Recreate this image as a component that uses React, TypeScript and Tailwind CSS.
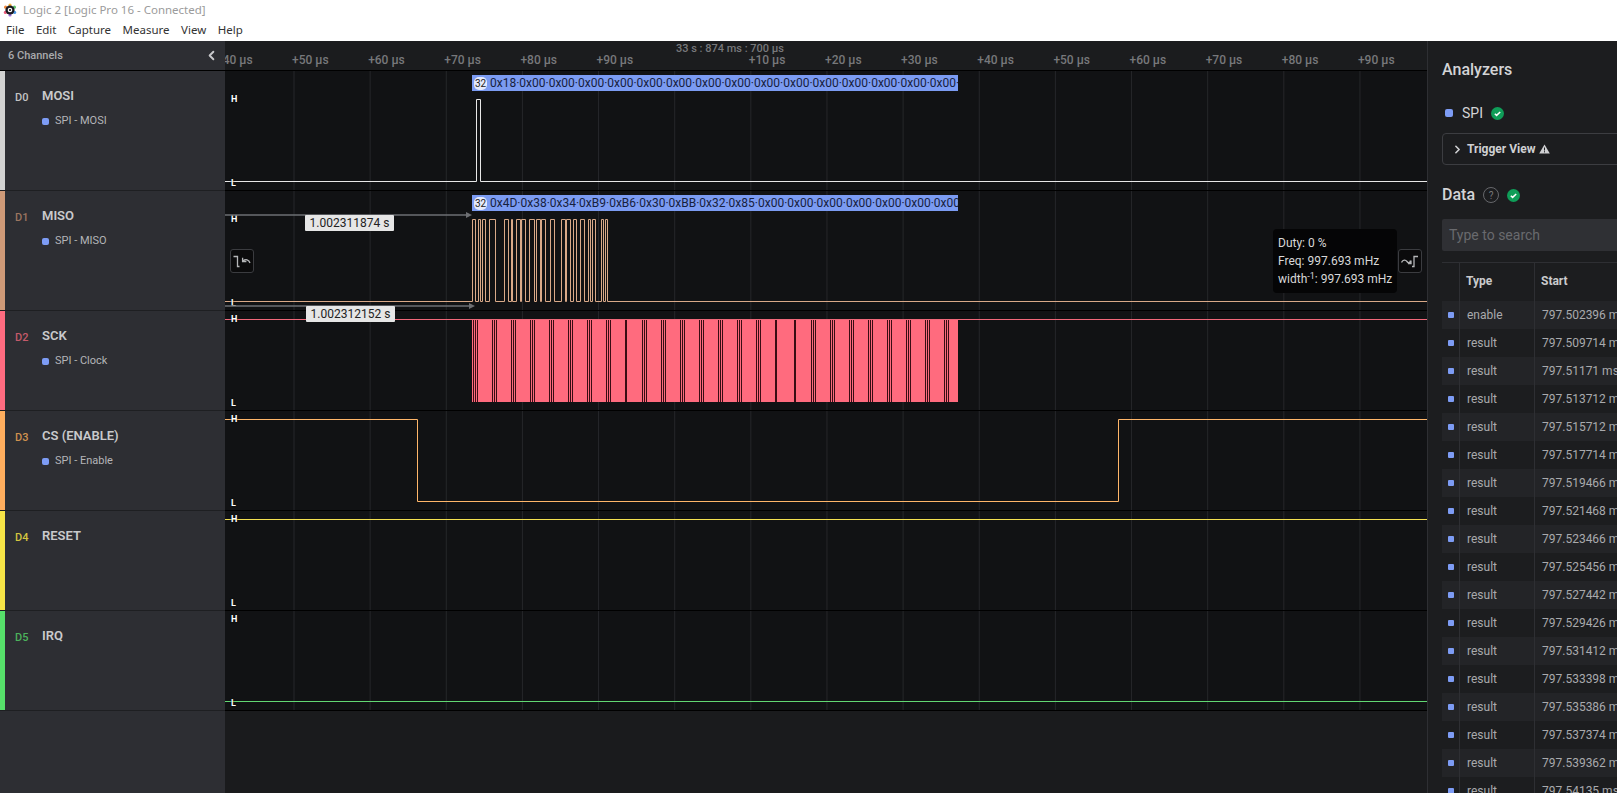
import { ChevronLeft, ChevronRight } from "lucide-react";

const GRID = Array.from({ length: 15 }, (_, i) => 294 + i * 76.14);
const TICKS = ["+50", "+60", "+70", "+80", "+90", "", "+10", "+20", "+30", "+40", "+50", "+60", "+70", "+80", "+90"];

// MISO high pulses, read off the capture (page x)
const MISO_PULSES: [number, number][] = [
  [472.5, 475], [478, 480.5], [482, 485], [489.5, 495], [504.5, 508.5], [511, 512.5], [516.5, 520],
  [521, 525], [529.5, 534], [536, 540], [541.5, 545], [550, 554.5], [561.5, 565.5], [566.5, 570],
  [573.5, 576.5], [580, 584.5], [588, 590.5], [592, 595], [601.5, 603.5], [605, 607.5],
];

// SCK: dark clock gaps, x of first stripe, triple or single
const SCK_TRIPLE = [473, 492, 511, 530, 549, 568, 587, 606, 642, 661, 680, 699, 718, 737, 756, 811, 830, 849, 868, 887, 906, 925, 944];
const SCK_SINGLE = [625, 775, 794];

const STARTS = [
  "797.502396", "797.509714", "797.51171", "797.513712", "797.515712", "797.517714", "797.519466", "797.521468", "797.523466",
  "797.525456", "797.527442", "797.529426", "797.531412", "797.533398", "797.535386", "797.537374", "797.539362", "797.54135",
];

const MOSI_BYTES = ["0x18", ...Array(17).fill("0x00")];
const MISO_BYTES = ["0x4D", "0x38", "0x34", "0xB9", "0xB6", "0x30", "0xBB", "0x32", "0x85", ...Array(9).fill("0x00")];

function pulsePath(low: number, high: number, pulses: [number, number][]) {
  const snap = (x: number) => Math.floor(x) + 0.5;
  let d = `M225 ${low}`;
  for (const [a, b] of pulses) d += ` H${snap(a)} V${high} H${snap(b)} V${low}`;
  return d + " H1427";
}

function Logo() {
  return (
    <svg width="14" height="14" viewBox="0 0 14 14" className="mr-[4px] ml-[3px] shrink-0">
      <circle cx="7" cy="2" r="1.6" fill="#f6b73c" />
      <circle cx="11.4" cy="4.2" r="1.6" fill="#5fc46b" />
      <circle cx="11.6" cy="9.4" r="1.6" fill="#4d9be8" />
      <circle cx="7" cy="12" r="1.6" fill="#9b6fd8" />
      <circle cx="2.4" cy="9.4" r="1.6" fill="#ea5a7b" />
      <circle cx="2.6" cy="4.2" r="1.6" fill="#f28a3c" />
      <circle cx="7" cy="7" r="4.6" fill="#1b1b22" />
      <circle cx="7" cy="7" r="2.3" fill="#fff" />
      <circle cx="7" cy="7" r="1.1" fill="#1b1b22" />
    </svg>
  );
}

function Check() {
  return (
    <svg width="13" height="13" viewBox="0 0 13 13">
      <circle cx="6.5" cy="6.5" r="6.5" fill="#0f9d58" />
      <path d="M3.8 6.8 5.6 8.4 9.2 5" fill="none" stroke="#fff" strokeWidth="1.5" />
    </svg>
  );
}

function ChannelLabel(props: { id: string; name: string; sub?: string; strip: string; idClass: string; className: string }) {
  return (
    <div className={`flex border-b border-[#1e1f22] ${props.className}`}>
      <div className={`w-[5px] ${props.strip}`} />
      <div className={`w-[37px] pt-[20px] pl-[10px] text-[11px] leading-[13px] font-medium ${props.idClass}`}>{props.id}</div>
      <div className="pt-[16px]">
        <div className="text-[13px] leading-[18px] font-semibold text-[#c9cacc]">{props.name}</div>
        {props.sub && (
          <div className="mt-[9px] flex items-center gap-[6px] text-[11px] leading-[14px] text-[#b4b5b8]">
            <span className="h-[7px] w-[7px] rounded-[2px] bg-[#7d9cf5]" />
            {props.sub}
          </div>
        )}
      </div>
    </div>
  );
}

function WaveRow(props: { height: number; hi: number; lo: number; children?: React.ReactNode }) {
  return (
    <div className="relative border-b border-black bg-[#111214]" style={{ height: props.height }}>
      <svg className="absolute inset-0" width="1202" height={props.height - 1} viewBox={`225 0 1202 ${props.height - 1}`}>
        {GRID.map((x) => (
          <line key={x} x1={x} x2={x} y1="0" y2={props.height} stroke="#26272a" />
        ))}
      </svg>
      {props.children}
      <span className="absolute left-[6px] text-[9px] leading-[10px] font-bold text-white [text-shadow:0_0_2px_#000]" style={{ top: props.hi - 5 }}>
        H
      </span>
      <span className="absolute left-[6px] text-[9px] leading-[10px] font-bold text-white [text-shadow:0_0_2px_#000]" style={{ top: props.lo - 4 }}>
        L
      </span>
    </div>
  );
}

function Trace(props: { height: number; d: string; color: string; children?: React.ReactNode }) {
  return (
    <svg className="absolute inset-0" width="1202" height={props.height} viewBox={`225 0 1202 ${props.height}`}>
      {props.children}
      <path d={props.d} fill="none" stroke={props.color} strokeWidth="1" />
    </svg>
  );
}

function Bubble(props: { bytes: string[] }) {
  return (
    <div className="absolute top-[4px] left-[247px] flex h-[16px] w-[486px] items-center overflow-hidden bg-[#7b9bf2] pl-[2px] text-[12px] whitespace-nowrap text-[#17213d]">
      <span className="mr-[3px] flex h-[13px] w-[13px] shrink-0 items-center justify-center rounded-[5px] bg-[#e4eafc] text-[10px] text-[#222]">32</span>
      {props.bytes.join("·")}
    </div>
  );
}

function Measure(props: { top: number; end: number; labelLeft: number; value: string }) {
  return (
    <>
      <svg className="absolute left-0" style={{ top: props.top - 4 }} width={props.end + 2} height="8">
        <path d={`M0 4H${props.end - 5}`} stroke="#6d6f73" strokeWidth="1.5" />
        <path d={`M${props.end - 6} 1 ${props.end} 4 ${props.end - 6} 7Z`} fill="#6d6f73" />
      </svg>
      <div
        className="absolute h-[16px] w-[89px] rounded-[1px] bg-[#e6e6e6] text-center text-[12px] leading-[16px] text-[#222]"
        style={{ left: props.labelLeft, top: props.top }}
      >
        {props.value}
      </div>
    </>
  );
}

export default function App() {
  return (
    <div className="flex h-[793px] w-[1617px] flex-col overflow-hidden bg-white font-['Roboto',sans-serif]">
      <div className="flex h-[19px] items-center font-['Noto_Sans',sans-serif] text-[11.5px] text-[#9b9b9b]">
        <Logo />
        <span className="ml-[2px]">Logic 2 [Logic Pro 16 - Connected]</span>
      </div>
      <div className="flex h-[22px] items-center gap-[11.5px] pl-[6px] font-['Noto_Sans',sans-serif] text-[11.5px] text-[#333]">
        <span>File</span>
        <span>Edit</span>
        <span>Capture</span>
        <span>Measure</span>
        <span>View</span>
        <span>Help</span>
      </div>

      <div className="flex min-h-0 flex-1">
        {/* channel list */}
        <div className="w-[225px] shrink-0 bg-[#2d2e33]">
          <div className="flex h-[30px] items-center justify-between border-b border-black pt-[1px] pr-[6px] pl-[8px] text-[11px] font-medium text-[#a9aaad]">
            6 Channels
            <ChevronLeft size={15} strokeWidth={3} className="mb-[2px] text-[#c8c9cc]" />
          </div>
          <ChannelLabel id="D0" name="MOSI" sub="SPI - MOSI" strip="bg-[#d2d2d2]" idClass="text-[#c4c4c4]" className="h-[120px]" />
          <ChannelLabel id="D1" name="MISO" sub="SPI - MISO" strip="bg-[#cf9a78]" idClass="text-[#9c7660]" className="h-[120px]" />
          <ChannelLabel id="D2" name="SCK" sub="SPI - Clock" strip="bg-[#ff6b80]" idClass="text-[#c45a6a]" className="h-[100px]" />
          <ChannelLabel id="D3" name="CS (ENABLE)" sub="SPI - Enable" strip="bg-[#ffae5e]" idClass="text-[#d0924f]" className="h-[100px]" />
          <ChannelLabel id="D4" name="RESET" strip="bg-[#f7e547]" idClass="text-[#d4c640]" className="h-[100px]" />
          <ChannelLabel id="D5" name="IRQ" strip="bg-[#56e06a]" idClass="text-[#4cb35c]" className="h-[100px]" />
        </div>

        {/* waveforms */}
        <div className="relative w-[1202px] shrink-0 overflow-hidden bg-[#1a1b1d]">
          <div className="relative h-[30px] border-b border-black bg-[#1b1c1e] text-[12px] font-medium text-[#77787b]">
            <span className="absolute top-[12px] left-[-9px] leading-[14px] whitespace-nowrap">+40 µs</span>
            {TICKS.map(
              (t, i) =>
                t && (
                  <span key={i} className="absolute top-[12px] leading-[14px] whitespace-nowrap" style={{ left: GRID[i] - 227 }}>
                    {t} µs
                  </span>
                ),
            )}
            <span className="absolute top-[1px] left-[450px] w-[110px] text-center text-[11px] leading-[13px] whitespace-nowrap">33 s : 874 ms : 700 µs</span>
          </div>

          <WaveRow height={120} hi={28} lo={111}>
            <Trace height={119} d="M225 110.5 H476.5 V28.5 H480.5 V110.5 H1427" color="#e8e8e8" />
            <Bubble bytes={MOSI_BYTES} />
          </WaveRow>

          <WaveRow height={120} hi={28} lo={111}>
            <Trace height={119} d={pulsePath(110.5, 28.5, MISO_PULSES)} color="#d9a988" />
            <Bubble bytes={MISO_BYTES} />
          </WaveRow>

          <WaveRow height={100} hi={8} lo={91}>
            <Trace height={99} d="M225 8.5 H1427" color="#f0687a">
              <rect x="472" y="9" width="486" height="82" fill="#ff6b7e" />
              {SCK_TRIPLE.map((x) => (
                <path key={x} d={`M${x + 0.5} 9V91M${x + 2.5} 9V91M${x + 4.5} 9V91`} stroke="#3a0d14" strokeWidth="1" />
              ))}
              {SCK_SINGLE.map((x) => (
                <path key={x} d={`M${x + 1} 9V91`} stroke="#3a0d14" strokeWidth="2" />
              ))}
            </Trace>
          </WaveRow>

          <WaveRow height={100} hi={8} lo={91}>
            <Trace height={99} d="M225 8.5 H417.5 V90.5 H1118.5 V8.5 H1427" color="#ffb66a" />
          </WaveRow>

          <WaveRow height={100} hi={8} lo={91}>
            <Trace height={99} d="M225 8.5 H1427" color="#f2df50" />
          </WaveRow>

          <WaveRow height={100} hi={8} lo={91}>
            <Trace height={99} d="M225 90.5 H1427" color="#62d873" />
          </WaveRow>

          {/* overlays on the MISO / SCK traces */}
          <Measure top={174} end={247} labelLeft={80} value="1.002311874 s" />
          <Measure top={265} end={250} labelLeft={81} value="1.002312152 s" />

          <button className="absolute top-[208px] left-[5px] flex h-[24px] w-[24px] items-center justify-center rounded-[3px] border border-[#3b3c40] bg-[#0b0b0c]">
            <svg width="18" height="13" viewBox="0 0 18 13" fill="none" stroke="#b5b6b8" strokeWidth="1.3">
              <path d="M0.5 1.5H4.5V11.5H6.5" />
              <path d="M17 8C16 4.5 12.5 3.8 10 6M9.6 2.8V6.6H13.4" />
            </svg>
          </button>

          <div className="absolute top-[188px] left-[1048px] h-[64px] w-[124px] rounded-[4px] bg-[#050506] pt-[5px] pl-[5px] text-[12px] leading-[18px] whitespace-nowrap text-[#d8d8d8]">
            <div>Duty: 0 %</div>
            <div>Freq: 997.693 mHz</div>
            <div className="h-[18px]">
              width<sup className="text-[9px] leading-[0]">-1</sup>: 997.693 mHz
            </div>
          </div>

          <button className="absolute top-[208px] left-[1173px] flex h-[24px] w-[24px] items-center justify-center rounded-[3px] border border-[#3b3c40] bg-[#0b0b0c]">
            <svg width="18" height="13" viewBox="0 0 18 13" fill="none" stroke="#b5b6b8" strokeWidth="1.3">
              <path d="M0.5 7.5C2 4.5 4.5 4.5 6 6.5S9 8 9.5 5.5M7 8.5H10V5.5" />
              <path d="M11 11.5H13V1.5H17" />
            </svg>
          </button>
        </div>

        {/* analyzers */}
        <div className="min-w-0 flex-1 overflow-hidden border-l border-[#2e2f33] bg-[#1c1d1f] pt-[19px] pl-[14px] text-[#d3d4d6]">
          <div className="h-[20px] text-[16px] leading-[20px] font-medium">Analyzers</div>
          <div className="mt-[23px] flex h-[20px] items-center pl-[3px] text-[14px]">
            <span className="mr-[9px] h-[8px] w-[8px] rounded-[2px] bg-[#7d9cf5]" />
            SPI
            <span className="ml-[8px] flex">
              <Check />
            </span>
          </div>
          <div className="mt-[10px] flex h-[32px] w-[300px] items-center rounded-[4px] border border-[#3c3d41] pl-[8px] text-[12px] font-bold text-[#cfd0d2]">
            <ChevronRight size={13} strokeWidth={3} className="mr-[3px]" />
            Trigger View
            <svg width="11" height="10" viewBox="0 0 11 10" className="ml-[4px]">
              <path d="M5.5 0.5 10.8 9.5H0.2Z" fill="#cfd0d2" />
              <path d="M5.5 3.5V6.5M5.5 7.2V8.4" stroke="#1c1d1f" strokeWidth="1" />
            </svg>
          </div>
          <div className="mt-[18px] flex h-[24px] items-center text-[16px] font-medium">
            Data
            <span className="mr-[8px] ml-[8px] flex h-[16px] w-[16px] items-center justify-center rounded-full border border-[#66676b] text-[10px] font-normal text-[#77787b]">?</span>
            <Check />
          </div>
          <div className="mt-[12px] flex h-[32px] w-[300px] items-center rounded-[2px] bg-[#2f3034] pl-[7px] text-[14px] text-[#696a6e]">Type to search</div>
          <div className="mt-[11px] w-[300px] border-t border-[#2e2f33]">
            <div className="flex h-[38px] text-[12px] font-bold text-[#c9cacc]">
              <div className="h-full w-[18px] border-r border-[#2e2f33]" />
              <div className="flex h-full w-[75px] items-center border-r border-[#2e2f33] pb-[3px] pl-[6px]">Type</div>
              <div className="flex h-full items-center pb-[3px] pl-[6px]">Start</div>
            </div>
            {STARTS.map((s, i) => (
              <div key={s} className={`flex h-[28px] items-center text-[12px] text-[#a9aaad] ${i % 2 === 0 ? "bg-[#232427]" : ""}`}>
                <div className="flex h-full w-[18px] items-center border-r border-[#2e2f33] pl-[6px]">
                  <span className="h-[6px] w-[6px] rounded-[1px] bg-[#7d9cf5]" />
                </div>
                <div className="flex h-full w-[75px] items-center border-r border-[#2e2f33] pl-[7px]">{i === 0 ? "enable" : "result"}</div>
                <div className="pl-[7px] whitespace-nowrap">{s} ms</div>
              </div>
            ))}
          </div>
        </div>
      </div>
    </div>
  );
}
